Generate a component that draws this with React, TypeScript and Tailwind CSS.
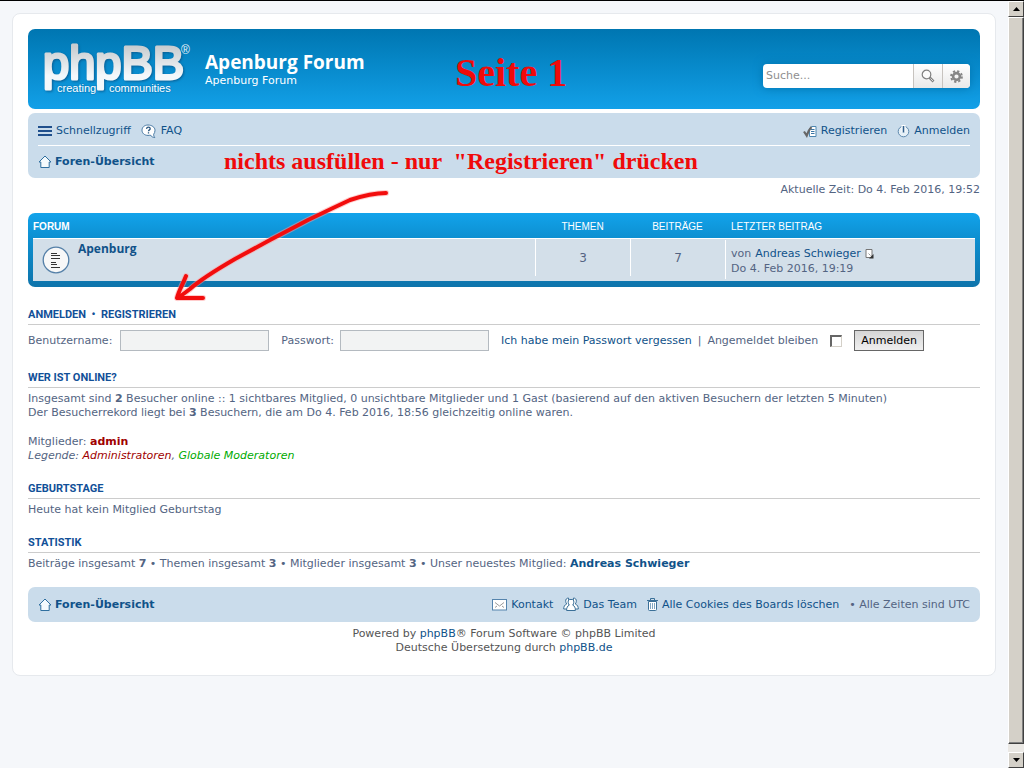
import type { ReactNode } from 'react';

const link = 'text-[#105289] hover:underline';

const HomeIcon = () => (
  <svg width="14" height="14" viewBox="0 0 14 14" fill="#f4fafd" stroke="#2f6f9f" strokeLinejoin="round">
    <path d="M7 1 L13 7 H11.2 V12.5 H2.8 V7 H1 Z" />
  </svg>
);

const MenuIcon = () => (
  <svg width="14" height="12" viewBox="0 0 14 12" fill="#1f4f8c">
    <path d="M0 1h14v2H0zM0 5h14v2H0zM0 9h14v2H0z" />
  </svg>
);

const FaqIcon = () => (
  <svg width="16" height="15" viewBox="0 0 16 15" fill="none">
    <path
      d="M7 1C3.5 1 1 3.200 1 6.200s2.500 5.200 6 5.200c.9 0 1.600-.1 2.300-.4 1 1.500 2.600 2.500 4.500 2.600-.9-.9-1.200-2.100-1.100-3.400.8-1.100 1.300-2.300 1.300-4C14 3.200 10.700 1 7 1Z"
      fill="#fff"
      stroke="#4a7ba5"
    />
    <path d="M5.500 4.800c.2-1.100.9-1.600 1.900-1.600s1.800.6 1.800 1.500c0 1.200-1.700 1.200-1.700 2.500M7.500 8.200v1.400" stroke="#27557f" strokeWidth="1.300" />
  </svg>
);

const RegisterIcon = () => (
  <svg width="14" height="13" viewBox="0 0 14 13" fill="none">
    <path d="M6.500 5.500V3.500L8.500 1.500h4.500v10H6.500z" fill="#fff" stroke="#4d86b0" />
    <path d="M8 4.500H11.500M8 6.500H11.500M8 8.500H11.500" stroke="#3a76a6" />
    <path d="M1 6.500 3.700 10.500 C5 7 6.500 4 8.500 2" stroke="#666" strokeWidth="2.200" />
  </svg>
);

const PowerIcon = () => (
  <svg width="13" height="13" viewBox="0 0 13 13" fill="none">
    <circle cx="6.500" cy="6.500" r="5.300" fill="#e6f0f7" stroke="#5d88ad" />
    <path d="M6.500 0V7" stroke="#fff" strokeWidth="4" />
    <path d="M6.500 1V7.500" stroke="#2f5f8c" strokeWidth="1.600" />
  </svg>
);

const MailIcon = () => (
  <svg width="15" height="12" viewBox="0 0 15 12" fill="none">
    <rect x=".5" y=".5" width="14" height="10.500" fill="#fff" stroke="#5584ad" />
    <path d="M3 3.500 7.500 7 12 3.500M3 8.500l2-1.500M12 8.500l-2-1.500" stroke="#999" />
  </svg>
);

const TeamIcon = () => (
  <svg width="16" height="15" viewBox="0 0 16 15" fill="#fff" stroke="#3b7098">
    <path d="M5.500 1C3.500 1 2.500 2.500 2.700 4.300c.1 1.200.5 2 1 2.700C1.500 8 .7 9.500.7 12h6z" />
    <path d="M10.500 1c2 0 3 1.500 2.800 3.300-.1 1.200-.5 2-1 2.700 2.200 1 3 2.500 3 5h-6z" />
    <path d="M8 2.500C6 2 5 3.400 5.100 5.200c.1 1.300.6 2.200 1.200 2.900C4.400 9 3.600 10.500 3.600 13.500h8.800c0-3-.8-4.500-2.700-5.400.6-.7 1.100-1.600 1.200-2.900C11 3.400 10 2 8 2.500Z" />
  </svg>
);

const TrashIcon = () => (
  <svg width="11" height="13" viewBox="0 0 11 13" fill="none" stroke="#3b7098">
    <path d="M1.500 3.500h8v8a1 1 0 0 1-1 1h-6a1 1 0 0 1-1-1z" fill="#fff" />
    <path d="M0 2.500h11M3.500 2V.5h4V2" />
    <path d="M3.500 5v6M5.500 5v6M7.500 5v6" stroke="#5f8fb2" strokeWidth=".8" />
  </svg>
);

const SearchIcon = () => (
  <svg width="14" height="14" viewBox="0 0 14 14" fill="none">
    <circle cx="5.500" cy="5.500" r="4.300" fill="#fafafa" stroke="#808080" strokeWidth="1.200" />
    <path d="M8.500 8.500 12.500 12.500" stroke="#808080" strokeWidth="2.600" />
    <path d="M9.500 9.500 12 12" stroke="#ddd" />
  </svg>
);

const GearIcon = () => (
  <svg width="13" height="13" viewBox="0 0 13 13" fill="none" stroke="#868686">
    <circle cx="6.500" cy="6.500" r="3.400" strokeWidth="2.600" />
    <circle cx="6.500" cy="6.500" r="5.400" strokeWidth="2" strokeDasharray="2.240 2" />
  </svg>
);

const ForumIcon = () => (
  <svg width="28" height="28" viewBox="0 0 28 28">
    <circle cx="14" cy="14" r="12.800" fill="#f8f8f8" stroke="#5580a8" strokeWidth="1.300" />
    <path d="M9 7.500h6M9 9.500h9M9 12.500h9M9 16.500h5M9 18.500h6M9 21.500h9" stroke="#333" />
  </svg>
);

const LastPostIcon = () => (
  <svg width="9" height="10" viewBox="0 0 9 10" fill="none">
    <path d="M1 .5h6v8H1z" fill="#fff" stroke="#777" />
    <path d="M8.500 5v4.500H4z" fill="#333" />
    <path d="M3.500 4.500l2 2" stroke="#999" />
  </svg>
);

const Logo = () => (
  <svg width="152" height="56" viewBox="0 0 152 56" role="img" aria-label="phpBB" className="overflow-visible">
    <defs>
      <linearGradient id="logoFill" x1="0" y1="0" x2="0" y2="1">
        <stop offset=".2" stopColor="#c9cdd0" />
        <stop offset=".75" stopColor="#f4f8fb" />
      </linearGradient>
    </defs>
    <g className="font-['Liberation_Sans',sans-serif]">
      <text
        x="0"
        y="38"
        fontSize="47"
        fill="url(#logoFill)"
        stroke="url(#logoFill)"
        strokeWidth="3"
        strokeLinejoin="round"
        className="drop-shadow-[1px_1px_1px_#0a5f95]"
      >
        phpBB
      </text>
      <text x="14" y="51" fontSize="11" fill="#fff" stroke="#0b89cc" strokeWidth="2" paintOrder="stroke">
        creating
      </text>
      <text x="66" y="51" fontSize="11" fill="#fff" stroke="#0b89cc" strokeWidth="2" paintOrder="stroke">
        communities
      </text>
      <text x="138" y="13" fontSize="12" fill="#e8f2f8">
        ®
      </text>
    </g>
  </svg>
);

const Section = ({ title, children }: { title: ReactNode; children: ReactNode }) => (
  <section className="mt-[19px]">
    <h3 className="border-b border-[#ccc] pb-[2px] font-['Roboto',sans-serif] text-[11px] leading-[14px] font-bold text-[#115098] uppercase">
      {title}
    </h3>
    <div className="mt-1">{children}</div>
  </section>
);

const Breadcrumb = () => (
  <a href="#" className="flex items-center gap-[3px] font-bold text-[#105289]">
    <HomeIcon />
    Foren-Übersicht
  </a>
);

const IconLink = ({ icon, children }: { icon: ReactNode; children: ReactNode }) => (
  <a href="#" className="flex items-center gap-1 text-[#105289]">
    {icon}
    {children}
  </a>
);

const scrollButton =
  'flex h-4 w-full items-center justify-center border border-t-white border-r-[#404040] border-b-[#404040] border-l-white bg-[#d4d0c8]';

const Scrollbar = () => (
  <div className="sticky top-0 flex h-[calc(100vh-1px)] w-4 shrink-0 flex-col bg-[#eae8e4]">
    <button type="button" aria-label="Nach oben" className={scrollButton}>
      <svg width="7" height="4" viewBox="0 0 7 4">
        <path d="M3.500 0 7 4H0z" />
      </svg>
    </button>
    <div className="flex-1 border border-t-white border-r-[#404040] border-b-[#404040] border-l-white bg-[#d4d0c8] shadow-[inset_-1px_-1px_#808080]" />
    <div className="h-2" />
    <button type="button" aria-label="Nach unten" className={scrollButton}>
      <svg width="7" height="4" viewBox="0 0 7 4">
        <path d="M0 0h7L3.500 4z" />
      </svg>
    </button>
  </div>
);

// Hand-drawn hints that lie over the page
const Notes = () => (
  <div className="pointer-events-none absolute inset-0 font-['Liberation_Serif',serif] font-bold whitespace-pre text-[#f00a0a]">
    <p className="absolute top-[50px] left-[455px] text-[40px] leading-[44px]">Seite 1</p>
    <p className="absolute top-[146px] left-[224px] text-[24px] leading-[28px]">
      nichts ausfüllen - nur  "Registrieren" drücken
    </p>
    <svg className="absolute top-[182px] left-[168px]" width="228" height="124" viewBox="168 184 228 124" fill="none" strokeLinecap="round" strokeLinejoin="round">
      <g stroke="#ff9a9a" strokeWidth="6" opacity=".5">
        <path d="M386 194C374 194 362 197 350 201L333 209 308 221 270 241 235 260C216 271 200 281 190 290L178 299M186 277C183 285 179 291 177 299L203 299" />
      </g>
      <g stroke="#f20d0d" strokeWidth="4">
        <path d="M386 194C374 194 362 197 350 201L333 209 308 221 270 241 235 260C216 271 200 281 190 290L178 299M186 277C183 285 179 291 177 299L203 299" />
      </g>
    </svg>
  </div>
);

const ForumTable = () => (
  <div className="mt-4 mb-[21px] rounded-[7px] bg-linear-to-b from-[#12a3eb] via-[#0d8fd0] via-35% to-[#0e74ab] px-[5px] pb-[6px]">
    <table className="w-full table-fixed border-collapse">
      <thead>
        <tr className="h-[25px] font-['Liberation_Sans',sans-serif] text-[10px] text-white uppercase">
          <th className="pt-1 text-left font-bold">Forum</th>
          <th className="w-[95px] pt-1 font-normal">Themen</th>
          <th className="w-[95px] pt-1 font-normal">Beiträge</th>
          <th className="w-[250px] pt-1 pl-[6px] text-left font-normal">Letzter Beitrag</th>
        </tr>
      </thead>
      <tbody>
        <tr className="h-[43px] border-t border-white bg-[#d3dfe9]">
          <td className="p-0">
            <div className="flex h-[42px] items-center gap-2 pl-[9px]">
              <ForumIcon />
              <a href="#" className="self-start pt-[2px] font-['Open_Sans',sans-serif] text-[12px] leading-[16px] font-bold text-[#105289]">
                Apenburg
              </a>
            </div>
          </td>
          <td className="p-0 pb-1 text-center text-[12px]">
            <div className="flex h-[37px] items-center justify-center border-l border-white">3</div>
          </td>
          <td className="p-0 pb-1 text-center text-[12px]">
            <div className="flex h-[37px] items-center justify-center border-l border-white">7</div>
          </td>
          <td className="p-0">
            <div className="h-[39px] border-l border-white pt-[6px] pl-[5px] leading-[15px]">
              <p className="flex items-center gap-1">
                von{' '}
                <a href="#" className={link}>
                  Andreas Schwieger
                </a>
                <a href="#" aria-label="Neuester Beitrag">
                  <LastPostIcon />
                </a>
              </p>
              <p>Do 4. Feb 2016, 19:19</p>
            </div>
          </td>
        </tr>
      </tbody>
    </table>
  </div>
);

const LoginForm = () => (
  <form className="flex h-[23px] items-center" onSubmit={(e) => e.preventDefault()}>
    <label htmlFor="username">Benutzername:</label>
    <input id="username" type="text" className="ml-2 h-[21px] w-[149px] border border-[#b4bac0] bg-[#f2f3f3] px-1" />
    <label htmlFor="password" className="ml-3">
      Passwort:
    </label>
    <input id="password" type="password" className="ml-[6px] h-[21px] w-[149px] border border-[#b4bac0] bg-[#f2f3f3] px-1" />
    <a href="#" className="ml-3 text-[#105289]">
      Ich habe mein Passwort vergessen
    </a>
    <span className="mx-[6px]">|</span>
    <label htmlFor="autologin">Angemeldet bleiben</label>
    <input
      id="autologin"
      type="checkbox"
      className="ml-3 size-[12px] appearance-none border-t-2 border-r border-b border-l-2 border-t-[#666] border-r-[#d4d0c8] border-b-[#d4d0c8] border-l-[#666] bg-white"
    />
    <button type="submit" className="ml-3 h-[21px] border border-[#666] bg-linear-to-b from-[#d6d6d6] to-[#efefef] px-[6px] text-black">
      Anmelden
    </button>
  </form>
);

export default function App() {
  return (
    <div className="relative flex min-h-screen border-t border-black bg-[#f5f7fa] font-['DejaVu_Sans',sans-serif] text-[11px] leading-[14px] text-[#536482]">
      <div className="min-w-0 flex-1 px-3 pt-3">
        <div className="rounded-lg border border-[#e6e9ed] bg-white px-[15px] pt-[15px] pb-5">
          <header className="flex h-20 items-center rounded-[7px] bg-linear-to-b from-[#0076b1] to-[#12a0e8] pr-[10px] pl-[15px] text-white">
            <a href="#" className="block">
              <Logo />
            </a>
            <div className="ml-[10px] flex-1">
              <h1 className="font-['Open_Sans',sans-serif] text-[19px] leading-[24px] font-bold">Apenburg Forum</h1>
              <p>Apenburg Forum</p>
            </div>
            <form
              className="mt-[14px] flex h-6 overflow-hidden rounded-[4px] bg-white shadow-[0_0_10px_#0075b0]"
              onSubmit={(e) => e.preventDefault()}
            >
              <input type="search" aria-label="Suche" placeholder="Suche..." className="w-[150px] px-[3px] text-[#333] outline-none placeholder:text-[#8f8f8f]" />
              <button type="submit" aria-label="Suche" className="flex w-[29px] items-center justify-center border-l border-[#c7c3bf] bg-linear-to-b from-white to-[#e9e9e9]">
                <SearchIcon />
              </button>
              <a href="#" aria-label="Erweiterte Suche" className="flex w-7 items-center justify-center border-l border-[#c7c3bf] bg-linear-to-b from-white to-[#e9e9e9]">
                <GearIcon />
              </a>
            </form>
          </header>

          <nav className="mt-1 rounded-[7px] bg-[#cadceb] px-[10px] pt-1">
            <div className="flex h-[29px] items-center border-b border-white">
              <IconLink icon={<MenuIcon />}>Schnellzugriff</IconLink>
              <span className="w-[10px]" />
              <IconLink icon={<FaqIcon />}>FAQ</IconLink>
              <div className="ml-auto flex gap-[10px]">
                <IconLink icon={<RegisterIcon />}>Registrieren</IconLink>
                <IconLink icon={<PowerIcon />}>Anmelden</IconLink>
              </div>
            </div>
            <div className="flex h-8 items-center">
              <Breadcrumb />
            </div>
          </nav>

          <p className="mt-[5px] text-right">Aktuelle Zeit: Do 4. Feb 2016, 19:52</p>

          <ForumTable />

          <Section
            title={
              <>
                <a href="#">Anmelden</a>&nbsp; • &nbsp;<a href="#">Registrieren</a>
              </>
            }
          >
            <LoginForm />
          </Section>

          <Section title="Wer ist online?">
            <p>
              Insgesamt sind <strong>2</strong> Besucher online :: 1 sichtbares Mitglied, 0 unsichtbare Mitglieder und 1 Gast (basierend auf den
              aktiven Besuchern der letzten 5 Minuten)
            </p>
            <p>
              Der Besucherrekord liegt bei <strong>3</strong> Besuchern, die am Do 4. Feb 2016, 18:56 gleichzeitig online waren.
            </p>
            <p className="mt-[15px]">
              Mitglieder:{' '}
              <a href="#" className="font-bold text-[#a00000]">
                admin
              </a>
            </p>
            <p className="italic">
              Legende:{' '}
              <a href="#" className="text-[#a00000]">
                Administratoren
              </a>
              ,{' '}
              <a href="#" className="text-[#00aa00]">
                Globale Moderatoren
              </a>
            </p>
          </Section>

          <Section title="Geburtstage">
            <p>Heute hat kein Mitglied Geburtstag</p>
          </Section>

          <Section title="Statistik">
            <p>
              Beiträge insgesamt <strong>7</strong> • Themen insgesamt <strong>3</strong> • Mitglieder insgesamt <strong>3</strong> • Unser neuestes
              Mitglied:{' '}
              <a href="#" className="font-bold text-[#105289]">
                Andreas Schwieger
              </a>
            </p>
          </Section>

          <footer>
            <div className="mt-4 flex h-[35px] items-center rounded-[7px] bg-[#cadceb] px-[10px]">
              <Breadcrumb />
              <div className="ml-auto flex items-center gap-[10px]">
                <IconLink icon={<MailIcon />}>Kontakt</IconLink>
                <IconLink icon={<TeamIcon />}>Das Team</IconLink>
                <IconLink icon={<TrashIcon />}>Alle Cookies des Boards löschen</IconLink>
                <span>• Alle Zeiten sind UTC</span>
              </div>
            </div>
            <div className="mt-[5px] text-center text-[#555]">
              <p>
                Powered by{' '}
                <a href="#" className={link}>
                  phpBB
                </a>
                ® Forum Software © phpBB Limited
              </p>
              <p>
                Deutsche Übersetzung durch{' '}
                <a href="#" className={link}>
                  phpBB.de
                </a>
              </p>
            </div>
          </footer>
        </div>
      </div>
      <Scrollbar />
      <Notes />
    </div>
  );
}
